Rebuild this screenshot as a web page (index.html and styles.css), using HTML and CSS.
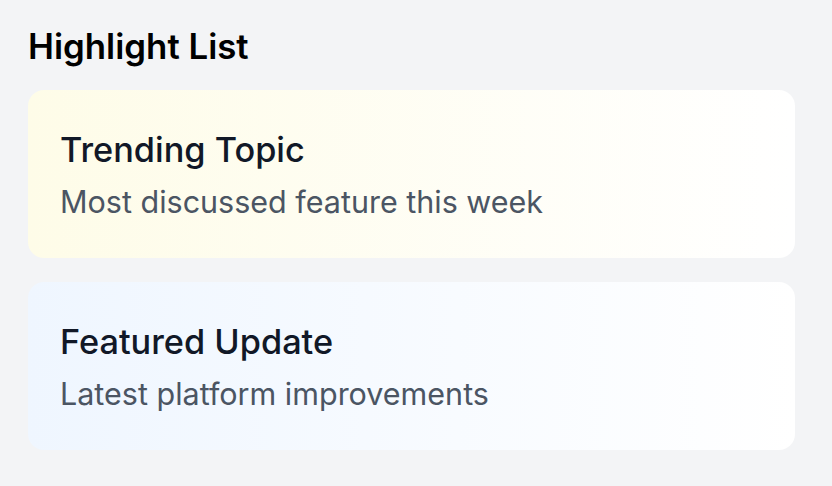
FILE: index.html
```html
<!DOCTYPE html>
<html lang="en">
<head>
    <meta charset="UTF-8">
    <meta name="viewport" content="width=device-width, initial-scale=1.0">
    <title>Highlight List</title>
    <link rel="stylesheet" href="styles.css">
</head>
<body>

<div class="container">
    <h2 class="list-title">Highlight List</h2>

    <div class="highlight-list">
        <!-- Trending card -->
        <div class="highlight-card card-yellow">
            <h3>Trending Topic</h3>
            <p>Most discussed feature this week</p>
        </div>

        <!-- Featured card -->
        <div class="highlight-card card-blue">
            <h3>Featured Update</h3>
            <p>Latest platform improvements</p>
        </div>
    </div>
</div>

</body>
</html>
```

FILE: styles.css
```css
body {
    margin: 0;
    font-family: Inter, "Noto Sans", sans-serif;
    background-color: #f3f4f6;
    color: #000;
}
.container {
    padding: 24px 37px 0 28px;
}
.list-title {
    margin: 0 0 22px 0;
    font-size: 34.8px;
    line-height: 44px;
    font-weight: 600;
}
.highlight-list {
    display: flex;
    flex-direction: column;
    gap: 24px;
}
.highlight-card {
    height: 168px;
    box-sizing: border-box;
    padding: 38px 32px 0 32px;
    border-radius: 16px;
}
.card-yellow {
    background: linear-gradient(to right, #fefce8, #ffffff);
}
.card-blue {
    background: linear-gradient(to right, #eff6ff, #ffffff);
}
.highlight-card h3 {
    margin: 0;
    font-size: 34.3px;
    line-height: 44px;
    font-weight: 500;
    color: #111827;
}
.highlight-card p {
    margin: 10px 0 0 0;
    font-size: 30.5px;
    line-height: 40px;
    color: #4b5563;
}
```
